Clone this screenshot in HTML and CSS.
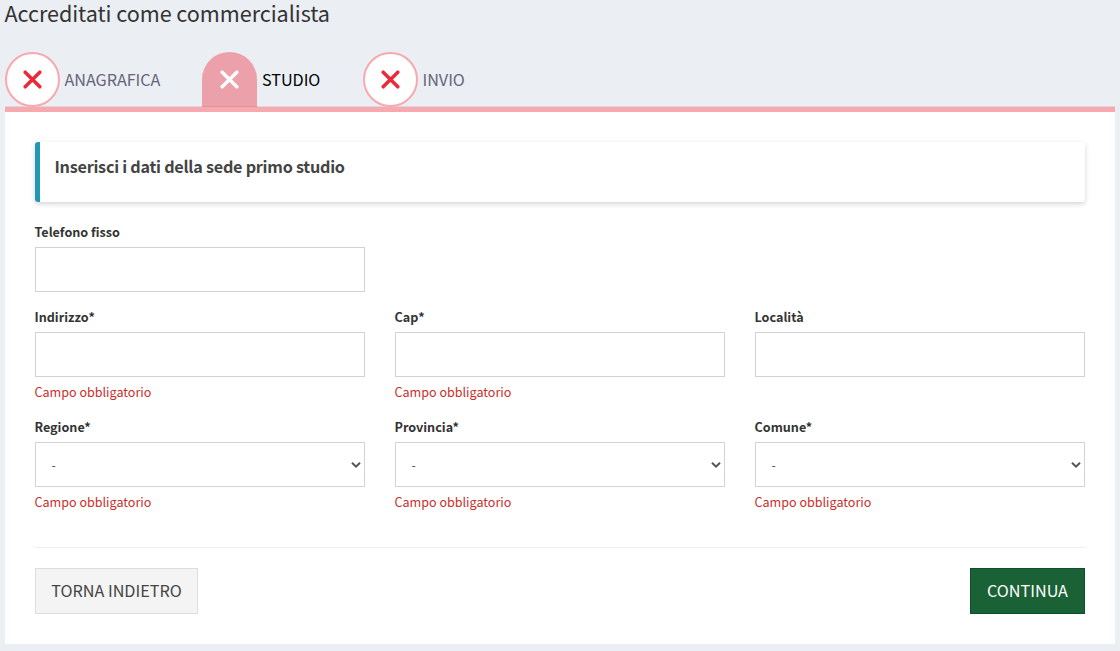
FILE: index.html
```html
<!DOCTYPE html>
<html lang="it">
<head>
<meta charset="utf-8">
<title>Accreditati come commercialista</title>
<link rel="stylesheet" href="styles.css">
</head>
<body>
<main class="page">
  <h1 class="title"><span>Accreditati come commercialista</span></h1>
  <nav class="tabs">
    <a class="tab tab-first"><span class="badge"><svg class="cross" viewBox="0 0 19 19"><path d="M2.2 2.2 16.8 16.8M16.8 2.2 2.2 16.8"/></svg></span><span class="tab-label">ANAGRAFICA</span></a>
    <a class="tab tab-second active"><span class="badge"><svg class="cross" viewBox="0 0 19 19"><path d="M2.2 2.2 16.8 16.8M16.8 2.2 2.2 16.8"/></svg></span><span class="tab-label">STUDIO</span></a>
    <a class="tab"><span class="badge"><svg class="cross" viewBox="0 0 19 19"><path d="M2.2 2.2 16.8 16.8M16.8 2.2 2.2 16.8"/></svg></span><span class="tab-label">INVIO</span></a>
  </nav>
  <form class="panel">
    <div class="callout"><span>Inserisci i dati della sede primo studio</span></div>
    <div class="row">
      <div class="field"><label class="label" for="tel">Telefono fisso</label><input class="control" id="tel"></div>
    </div>
    <div class="row">
      <div class="field"><label class="label" for="ind">Indirizzo*</label><input class="control" id="ind"><span class="error">Campo obbligatorio</span></div>
      <div class="field"><label class="label" for="cap">Cap*</label><input class="control" id="cap"><span class="error">Campo obbligatorio</span></div>
      <div class="field"><label class="label" for="loc">Località</label><input class="control" id="loc"></div>
    </div>
    <div class="row">
      <div class="field"><label class="label">Regione*</label><div class="control select"><span>-</span><svg class="chevron" viewBox="0 0 10 8"><path d="M1 1.7 5 5.7 9 1.7"/></svg></div><span class="error">Campo obbligatorio</span></div>
      <div class="field"><label class="label">Provincia*</label><div class="control select"><span>-</span><svg class="chevron" viewBox="0 0 10 8"><path d="M1 1.7 5 5.7 9 1.7"/></svg></div><span class="error">Campo obbligatorio</span></div>
      <div class="field"><label class="label">Comune*</label><div class="control select"><span>-</span><svg class="chevron" viewBox="0 0 10 8"><path d="M1 1.7 5 5.7 9 1.7"/></svg></div><span class="error">Campo obbligatorio</span></div>
    </div>
    <div class="actions">
      <button type="button" class="btn back">TORNA INDIETRO</button>
      <button type="button" class="btn next">CONTINUA</button>
    </div>
  </form>
</main>
</body>
</html>
```
FILE: styles.css
```css
* { box-sizing: border-box; }
body {
  margin: 0;
  background: #ebeef3;
  color: #333;
  font-family: "Source Sans Pro", "Noto Sans CJK SC", sans-serif;
  font-size: 12.6px;
  line-height: 20px;
}
.page { height: 651px; padding: 0 5px; }
.title {
  margin: 0 0 0 -.6px;
  height: 52px;
  font-size: 21.6px;
  font-weight: 400;
  letter-spacing: -.05px;
  line-height: 26px;
}
.tabs {
  display: flex;
  height: 60px;
  border-bottom: 5px solid #f8a9af;
  background: linear-gradient(#d8dadf, #d8dadf) bottom / 100% 1px no-repeat;
}
.tab { display: flex; align-items: center; gap: 4.5px; height: 55px; color: #67647a; }
.tab-first { width: 197px; }
.tab-second { width: 161px; }
.tab-label { padding-bottom: 2px; font-size: 16.2px; letter-spacing: -.04px; line-height: 24px; }
.badge {
  display: flex;
  align-items: center;
  justify-content: center;
  width: 55px;
  height: 55px;
  border: 2px solid #f8a9af;
  border-radius: 50%;
  background: #fff;
}
.cross { width: 19px; height: 19px; fill: none; stroke: #ed2939; stroke-width: 3.5; stroke-linecap: round; }
.active { gap: 5px; color: #000; }
.active .badge { border: 0; border-radius: 28px 28px 0 0; background: #eca0aa; box-shadow: inset 0 -1px #df919d; }
.active .cross { stroke: #fff; }
.panel { height: 532px; padding: 30px; background: #fff; }
.callout {
  height: 60px;
  margin-bottom: 20px;
  padding: 12px 14.5px;
  border-left: 5px solid #2496b8;
  border-radius: 3px;
  box-shadow: 0 2px 5px rgba(0, 0, 0, .17);
  color: #444;
  font-size: 16.2px;
  font-weight: 700;
  letter-spacing: -.25px;
  line-height: 24px;
}
.row { display: grid; grid-template-columns: repeat(3, 1fr); gap: 30px; margin-bottom: 15px; }
.field { display: flex; flex-direction: column; }
.label { height: 25px; margin-left: -.5px; font-weight: 700; line-height: 20px; }
.control { width: 100%; height: 45px; border: 1px solid #d2d3df; background: #fff; }
.select { display: flex; align-items: center; justify-content: space-between; padding: 0 3px 0 15.5px; color: #555; }
.chevron { width: 10px; height: 8px; fill: none; stroke: #555; stroke-width: 2; }
.error { margin: 5px 0 0 -.5px; color: #c9302c; letter-spacing: -.02px; }
.actions {
  display: flex;
  justify-content: space-between;
  margin-top: 35px;
  padding-top: 20px;
  border-top: 1px solid #eee;
}
.btn { height: 46px; padding: 0 0 2px; border: 1px solid; font: 16.2px/24px "Source Sans Pro", "Noto Sans CJK SC", sans-serif; }
.back { width: 163px; border-color: #ddd; background: #f4f4f4; color: #444; }
.next { width: 115px; border-color: #0d4f2a; background: #1a6135; color: #fff; }
```
